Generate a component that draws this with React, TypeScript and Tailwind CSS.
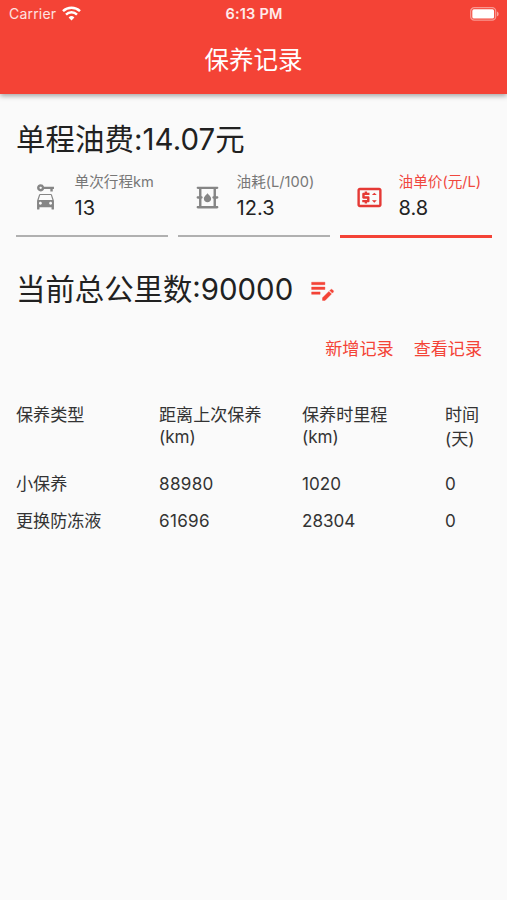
import { MdCarRental, MdOutlineOilBarrel, MdOutlinePriceChange } from 'react-icons/md';
import type { IconType } from 'react-icons';

interface FieldProps {
  label: string;
  value: string;
  icon: IconType;
  active?: boolean;
}

const fields: FieldProps[] = [
  { label: '单次行程km', value: '13', icon: MdCarRental },
  { label: '油耗(L/100)', value: '12.3', icon: MdOutlineOilBarrel },
  { label: '油单价(元/L)', value: '8.8', icon: MdOutlinePriceChange, active: true },
];

const columns = [
  { title: '保养类型' },
  { title: '距离上次保养', unit: '(km)' },
  { title: '保养时里程', unit: '(km)' },
  { title: '时间', unit: '(天)', tall: true },
];

const records = [
  { type: '小保养', distance: '88980', mileage: '1020', days: '0' },
  { type: '更换防冻液', distance: '61696', mileage: '28304', days: '0' },
];

function StatusBar() {
  return (
    <div className="grid h-[27px] grid-cols-3 items-center pl-[9px] pr-[8px] text-white">
      <div className="flex items-center gap-[6px]">
        <span className="text-[14px] tracking-[0.2px] text-white/85">Carrier</span>
        <svg width="19" height="15" viewBox="0 0 19 15" fill="none" stroke="currentColor" strokeWidth="2.5">
          <path d="M1 5.2a12.3 12.3 0 0 1 17 0" />
          <path d="M4 8.6a7.9 7.9 0 0 1 11 0" />
          <path d="M9.5 14.4 6.6 11.4a4.3 4.3 0 0 1 5.8 0Z" fill="currentColor" stroke="none" />
        </svg>
      </div>
      <span className="pt-px text-center text-[14.5px] font-semibold leading-[26px] tracking-[0.2px] text-white/90">
        6:13 PM
      </span>
      <div className="flex justify-end">
        <svg width="29" height="14" viewBox="0 0 29 14">
          <rect x="0.7" y="0.7" width="25" height="12.4" rx="3.6" fill="none" stroke="white" strokeOpacity="0.45" strokeWidth="1.3" />
          <rect x="2.3" y="2.3" width="21.8" height="9.2" rx="1.6" fill="white" />
          <path d="M27 4.5c2.2.8 2.2 4 0 4.8Z" fill="white" fillOpacity="0.5" />
        </svg>
      </div>
    </div>
  );
}

function EditIcon() {
  return (
    <svg className="size-[29px] text-[#f44336]" viewBox="0 0 24 24" fill="currentColor" stroke="currentColor" strokeWidth="0.35">
      <path d="M3 10h11v2H3zM3 6h11v2H3zM3 14h7v2H3z" />
      <path d="m18.01 12.87.71-.71a1 1 0 0 1 1.41 0l.71.71c.39.39.39 1.02 0 1.41l-.71.71-2.12-2.12zm-.71.71-5.3 5.3V21h2.12l5.3-5.3-2.12-2.12z" />
    </svg>
  );
}

function Field({ label, value, icon: Icon, active }: FieldProps) {
  return (
    <div
      className={`flex flex-1 items-start ${
        active ? 'h-[72px] border-b-[3px] border-[#f44336]' : 'h-[71px] border-b-2 border-[#b0b0b0]'
      }`}
    >
      <div className="flex w-[58px] shrink-0 justify-center pt-[17px]">
        <Icon className={`size-[29px] ${active ? 'text-[#e53935]' : 'text-[#858585]'}`} />
      </div>
      <div className="whitespace-nowrap pl-[0.6px] pt-[5px]">
        <p className={`text-[14.6px] leading-[22px] ${active ? 'text-[#f0473e]' : 'text-[#777777]'}`}>{label}</p>
        <p className="text-[20px] leading-[30px] text-[#222222]">{value}</p>
      </div>
    </div>
  );
}

export default function App() {
  return (
    <div className="min-h-[900px] w-full bg-[#fafafa] font-['Inter','Noto_Sans_CJK_SC',sans-serif] text-[#212121]">
      <header className="h-[94px] bg-[#f44336] shadow-[0_2px_5px_rgba(0,0,0,0.35)]">
        <StatusBar />
        <h1 className="text-center text-[24.5px] leading-[66px] text-white">保养记录</h1>
      </header>

      <main className="pl-[16px] pr-[15px]">
        <h2 className="pt-[25px] text-[29.4px] leading-[42px] tracking-[0.1px]">单程油费:14.07元</h2>

        <div className="mt-[5px] flex h-[71px] gap-[10px]">
          {fields.map((field) => (
            <Field key={field.label} {...field} />
          ))}
        </div>

        <div className="mt-[31px] flex items-center">
          <h2 className="pt-px text-[29.4px] leading-[42px]">当前总公里数:90000</h2>
          <button className="ml-[15px]">
            <EditIcon />
          </button>
        </div>

        <div className="mt-[25px] flex justify-end gap-[20px] pr-[10px] text-[17.1px] leading-[26px] text-[#f44336]">
          <button>新增记录</button>
          <button>查看记录</button>
        </div>

        <div className="mt-[40px] text-[17.1px] text-[#333333]">
          <div className="grid h-[70px] grid-cols-[143px_143px_143px_1fr]">
            {columns.map(({ title, unit, tall }) => (
              <div key={title}>
                <p className="leading-[25px]">{title}</p>
                {unit && <p className={tall ? 'leading-[24px]' : 'leading-[19px]'}>{unit}</p>}
              </div>
            ))}
          </div>
          {records.map((record) => (
            <div key={record.type} className="grid h-[37px] grid-cols-[143px_143px_143px_1fr] leading-[24px]">
              <span>{record.type}</span>
              <span className="tracking-[0.3px]">{record.distance}</span>
              <span>{record.mileage}</span>
              <span>{record.days}</span>
            </div>
          ))}
        </div>
      </main>
    </div>
  );
}
